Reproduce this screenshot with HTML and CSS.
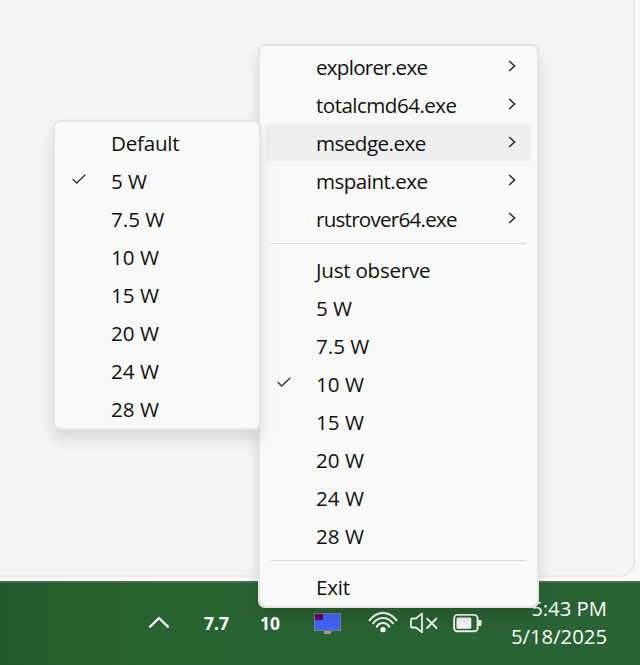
FILE: index.html
```
<!DOCTYPE html>
<html lang="en">
<head>
<meta charset="utf-8">
<title>Power limits</title>
<link rel="stylesheet" href="styles.css">
</head>
<body>
<svg width="0" height="0" class="defs" aria-hidden="true">
  <symbol id="chev" viewBox="0 0 8 12"><path d="M1.2 1 L6.5 6 L1.2 11" fill="none" stroke="#333" stroke-width="1.7"/></symbol>
  <symbol id="check" viewBox="0 0 14 10"><path d="M.7 5 L4.7 9 L13.3 .7" fill="none" stroke="#333" stroke-width="1.3"/></symbol>
</svg>
<div class="desktop">
  <main class="backdrop"><div class="window"></div></main>
  <footer class="taskbar">
    <svg class="up" width="20" height="12" viewBox="0 0 20 12"><path d="M1.2 10.6 L10 2 L18.8 10.6" fill="none" stroke="#fff" stroke-width="2.3" stroke-linecap="round" stroke-linejoin="round"/></svg>
    <span class="watts now">7.7</span>
    <span class="watts limit">10</span>
    <svg class="monitor" width="27" height="21" viewBox="0 0 27 21"><path d="M10 17h7v4h-7z" fill="#999"/><rect x=".5" y=".5" width="26" height="17" fill="#4065f5" stroke="#79808c"/><path d="M1 1h8v6H1z" fill="#900090"/><path d="M4.500 2H2v2h2v2H2M6 2h2v4H6z" fill="none" stroke="#27002c"/></svg>
    <svg class="wifi" width="30" height="22" viewBox="0 0 30 22"><g fill="none" stroke="#eef3ee" stroke-width="2.100" stroke-linecap="round"><path d="M1.500 9.300Q7.500 1.900 15 1.900T28.500 9.300"/><path d="M5 12.500Q9 7 15 7T25 12.500"/><path d="M8.800 15.600Q11 12 15 12T21.200 15.600"/></g><circle cx="15" cy="18.700" r="2.600" fill="#fff"/></svg>
    <svg class="mute" width="28" height="22" viewBox="0 0 28 22"><g fill="none" stroke="#eef3ee" stroke-width="1.800" stroke-linejoin="round" stroke-linecap="round"><path d="M1 7.500Q1 6.500 2 6.500H6L12 1.500V20.300L6 15.500H2Q1 15.500 1 14.500Z"/><path d="M17 6.500L26.500 16M26.500 6.500L17 16"/></g></svg>
    <svg class="battery" width="29" height="20" viewBox="0 0 29 20"><rect x="1.100" y="1.900" width="23.500" height="16.400" rx="3.500" fill="none" stroke="#eef3ee" stroke-width="1.900"/><rect x="3.500" y="4.500" width="14.800" height="11.300" rx="1.500" fill="#f4f4f4"/><path d="M25 7h2q1.500 0 1.500 1.300v3.400q0 1.300-1.500 1.300h-2z" fill="#eee"/></svg>
    <div class="clock"><span class="time">5:43 PM</span><span class="date">5/18/2025</span></div>
  </footer>

  <nav class="menu apps">
    <div class="row"><span class="narrow">explorer.exe</span><svg class="chev"><use href="#chev"/></svg></div>
    <div class="row"><span class="tight">totalcmd64.exe</span><svg class="chev"><use href="#chev"/></svg></div>
    <div class="row hover"><span class="tight">msedge.exe</span><svg class="chev"><use href="#chev"/></svg></div>
    <div class="row"><span class="tight">mspaint.exe</span><svg class="chev"><use href="#chev"/></svg></div>
    <div class="row"><span class="narrow">rustrover64.exe</span><svg class="chev"><use href="#chev"/></svg></div>
    <hr>
    <div class="row"><span class="snug">Just observe</span></div>
    <div class="row"><span>5 W</span></div>
    <div class="row"><span>7.5 W</span></div>
    <div class="row"><svg class="check"><use href="#check"/></svg><span>10 W</span></div>
    <div class="row"><span>15 W</span></div>
    <div class="row"><span>20 W</span></div>
    <div class="row"><span>24 W</span></div>
    <div class="row"><span>28 W</span></div>
    <hr>
    <div class="row"><span class="snug">Exit</span></div>
  </nav>

  <nav class="menu limits">
    <div class="row"><span class="snug">Default</span></div>
    <div class="row"><svg class="check"><use href="#check"/></svg><span>5 W</span></div>
    <div class="row"><span>7.5 W</span></div>
    <div class="row"><span>10 W</span></div>
    <div class="row"><span>15 W</span></div>
    <div class="row"><span>20 W</span></div>
    <div class="row"><span>24 W</span></div>
    <div class="row"><span>28 W</span></div>
  </nav>
</div>
</body>
</html>
```
FILE: styles.css
```
* { box-sizing: border-box; }
body { margin: 0; overflow: hidden; font-family: "Open Sans", "Noto Sans", sans-serif; }
.defs { position: absolute; }
.desktop { position: relative; width: 640px; height: 665px; display: flex; flex-direction: column; overflow: hidden; }
.backdrop { height: 581px; background: #f9f9f9; padding: 0 5px 4px 0; }
.window { height: 577px; background: #f5f5f5; border: 2px solid #e9e9e9; border-width: 0 2px 2px 0; border-radius: 0 0 15px 0; }
.taskbar { height: 84px; display: flex; align-items: flex-start; background: linear-gradient(90deg, #245a2b, #2a6332 25%, #296234); border-top: 2px solid #4c6b50; color: #fff; }
.taskbar > * { flex: none; }
.up { margin: 33px 0 0 149px; }
.watts { font-size: 17.5px; line-height: 24px; font-weight: 700; margin-top: 28px; }
.now { margin-left: 35px; width: 56px; }
.limit { width: 54px; }
.monitor { margin: 30px 0 0; }
.wifi { margin: 28px 0 0 27px; }
.mute { margin: 29px 0 0 12px; }
.battery { margin: 30px 0 0 15px; }
.clock { width: 125px; margin-top: 11px; display: flex; flex-direction: column; align-items: flex-end; font-size: 20.3px; line-height: 28px; }
.menu { position: absolute; background: #f9f9f9; border: 2px solid #e5e5e5; border-radius: 7px; padding: 1px 6px; box-shadow: 0 9px 15px rgba(0,0,0,.13); color: #111; background-clip: padding-box; }
.apps { left: 258px; top: 44px; width: 281px; height: 564px; }
.limits { left: 53px; top: 120px; width: 208px; height: 310px; }
.row { height: 38px; display: grid; grid-template-columns: 50px 1fr 34px; align-items: center; border-radius: 4px; font-size: 20.6px; line-height: 28px; white-space: nowrap; }
.row span { grid-column: 2; grid-row: 1; padding-top: 1px; }
.narrow { letter-spacing: -.75px; }
.tight { letter-spacing: -.54px; }
.snug { letter-spacing: -.25px; }
.hover { background: #efefef; }
.chev { grid-column: 3; grid-row: 1; width: 8px; height: 12px; margin: 0 0 0 11px; }
.check { grid-column: 1; grid-row: 1; width: 14px; height: 10px; margin: 0 0 2px 11px; }
hr { height: 1px; border: 0; background: #d6d6d6; margin: 6px 5px; }
```
